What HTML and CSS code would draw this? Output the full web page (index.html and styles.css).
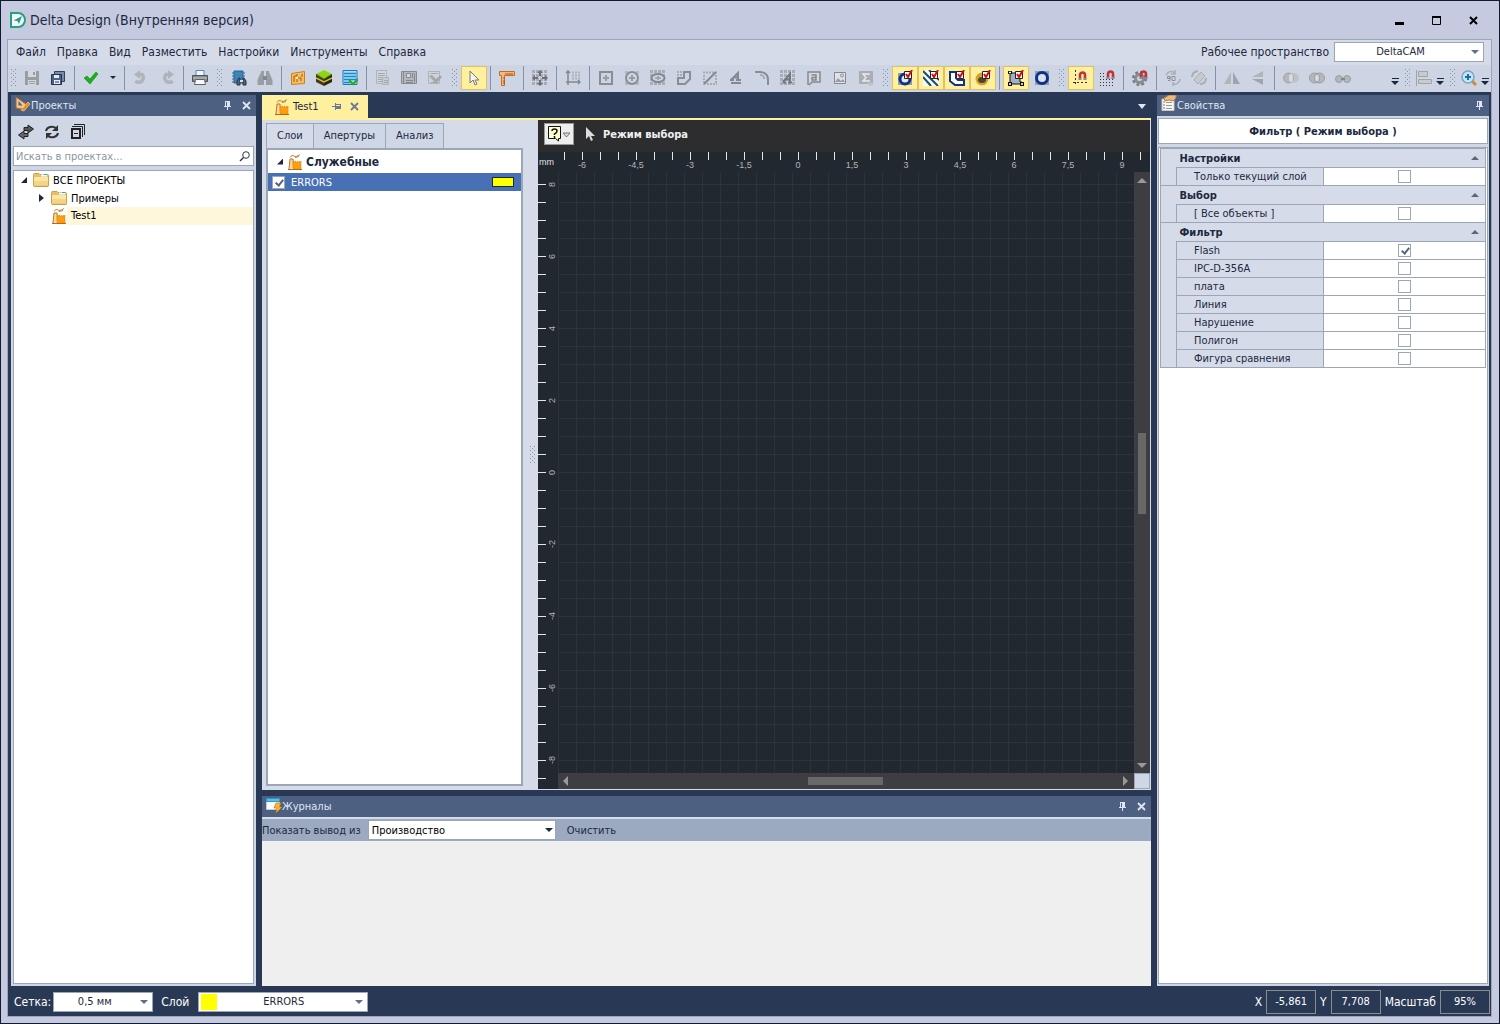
FILE: index.html
```html
<!DOCTYPE html>
<html lang="ru">
<head>
  <meta charset="UTF-8" />
  <meta name="viewport" content="width=device-width, initial-scale=1.0" />
  <title>Delta Design</title>
  <link rel="stylesheet" href="styles.css">
</head>
<body>
  <!-- shared icons -->
  <svg class="sprite" aria-hidden="true">
    <symbol id="pin" viewBox="0 0 9 9"><path d="M2 0h5v5h1v1H5v3H4V6H1V5h1zM3 1v4h1V1z" fill="currentColor" fill-rule="evenodd"/></symbol>
    <symbol id="close" viewBox="0 0 9 9"><path d="M1 1l7 7M8 1L1 8" stroke="currentColor" stroke-width="1.8"/></symbol>
    <symbol id="factory" viewBox="0 0 16 16">
      <path d="M2 15L3 5h3l.5 9" fill="#f6d7a0" stroke="#c07818"/>
      <path d="M6 15V8l2.500-1v2l2-2v2l2-2v2l1.500-2v8z" fill="#ff9d0a" stroke="#e08a10" stroke-width=".6"/>
      <path d="M3 3.500c1-2 3-2.500 4-1.500s3 .5 6-1.500M8 3.500l4-1" fill="none" stroke="#b98248"/>
      <path d="M1 15.500h14" stroke="#b96a10"/>
    </symbol>
    <symbol id="folder" viewBox="0 0 16 14">
      <path d="M.5 2.500V12.500q0 .5.5 1h14q.5 0 .5-1v-10q0-1-1-1H7L6 .5H1.500q-1 0-1 1z" fill="#e9bf62" stroke="#c9a04c"/>
      <path d="M1 4h14v8.500H1z" fill="#f5d583"/><path d="M1 4h14v4H1z" fill="#fbe6a9"/><path d="M8 1.500h6V3.500H8z" fill="#fff"/><path d="M11 1.500h3" stroke="#2aa7d8"/>
    </symbol>
    <symbol id="redcheck" viewBox="0 0 9 9"><path d="M.5 1.500h7v7h-7z" fill="#fff" stroke="#222"/><path d="M2 4l2 3 4-7" fill="none" stroke="#d01010" stroke-width="2"/></symbol>
    <symbol id="dots" viewBox="0 0 16 16"><path d="M0 1.500h16M0 5.500h16M0 9.500h16M0 13.500h16" stroke="#a9acb4" stroke-width="3" stroke-dasharray="3 1"/></symbol>
    <symbol id="magnet" viewBox="0 0 9 9"><path d="M2 9V4a2.500 2.500 0 0 1 5 0v5" fill="none" stroke="#c3313a" stroke-width="2.600"/><path d="M.7 8h2.600M5.700 8h2.600" stroke="#8a8f96" stroke-width="2"/></symbol>
  </svg>

  <div class="window">
    <header class="titlebar">
      <svg class="logo" viewBox="0 0 16 16"><path d="M1 1h7a7 7 0 0 1 0 14H1z" fill="#f2faf7" stroke="#2b9d80" stroke-width="2"/><path d="M3.500 8.500L12 4 9 12 7.500 9z" fill="#2b9d80"/></svg>
      <h1>Delta Design (Внутренняя версия)</h1>
      <button class="win-btn" aria-label="Свернуть"><svg viewBox="0 0 11 11"><path d="M1 8.500h9" stroke="#000" stroke-width="3"/></svg></button>
      <button class="win-btn" aria-label="Развернуть"><svg viewBox="0 0 11 11"><path d="M1.500 2h8v7.500h-8z" fill="none" stroke="#000"/><path d="M1 2h9" stroke="#000" stroke-width="2"/></svg></button>
      <button class="win-btn" aria-label="Закрыть"><svg viewBox="0 0 11 11"><path d="M2 2l7 7M9 2L2 9" stroke="#000" stroke-width="2"/></svg></button>
    </header>

    <div class="frame">
      <div class="menubar">
        <nav class="menu">
          <a href="#">Файл</a><a href="#">Правка</a><a href="#">Вид</a><a href="#">Разместить</a><a href="#">Настройки</a><a href="#">Инструменты</a><a href="#">Справка</a>
        </nav>
        <label for="workspace">Рабочее пространство</label>
        <span class="combo workspace"><select id="workspace"><option>DeltaCAM</option></select></span>
      </div>

      <div class="toolbar">
        <i class="grip first"></i>
        <button class="tool" aria-label="Сохранить"><svg viewBox="0 0 16 16"><path d="M1 1h14v14H1z" fill="#9a9da3"/><path d="M4 1h8v6H4zM4 10h8v5H4z" fill="#d5d8df"/><path d="M9 2h2v3H9z" fill="#9a9da3"/><path d="M5 11.500h6M5 13.500h6" stroke="#9a9da3"/></svg></button>
        <button class="tool" aria-label="Сохранить все"><svg viewBox="0 0 16 16"><path d="M4.500 1.500h10v10h-10z" fill="#7b8aa5" stroke="#31415f"/><path d="M1.500 4.500h10v10h-10z" fill="#4d6288" stroke="#24344f"/><path d="M4 5h5v3H4zM4 10h6v4H4z" fill="#e6ebf4"/><path d="M5 12h4" stroke="#24344f"/></svg></button>
        <i class="sep"></i>
        <button class="tool" aria-label="Применить"><svg viewBox="0 0 16 16"><path d="M1 8l3-2 3 3 6-7 2 2-8 10z" fill="#19b01c" stroke="#0d8d12" stroke-width=".6"/></svg></button>
        <button class="tool drop" aria-label="Варианты"><i class="arrow"></i></button>
        <i class="sep"></i>
        <button class="tool" aria-label="Отменить"><svg viewBox="0 0 16 16"><path d="M6 4.500h3a4.500 4.500 0 1 1-6.500 6.500" fill="none" stroke="#b0b3b9" stroke-width="3.500"/><path d="M7 0v9L1 4.500z" fill="#b0b3b9"/></svg></button>
        <button class="tool" aria-label="Повторить"><svg viewBox="0 0 16 16"><path d="M10 4.500H7a4.500 4.500 0 1 0 6.500 6.500" fill="none" stroke="#b0b3b9" stroke-width="3.500"/><path d="M9 0v9l6-4.500z" fill="#b0b3b9"/></svg></button>
        <i class="sep"></i>
        <button class="tool" aria-label="Печать"><svg viewBox="0 0 16 16"><path d="M4 .5h8v6H4z" fill="#eef5ff" stroke="#5b87c0"/><path d="M.5 5.500h15v6H.5z" fill="#888c90" stroke="#4e5256"/><path d="M1 8h14" stroke="#c5c8ca"/><path d="M3.500 9.500h9l1 5h-11z" fill="#fafafa" stroke="#606468"/></svg></button>
        <i class="grip"></i>
        <button class="tool" aria-label="Найти компонент"><svg viewBox="0 0 16 16"><path d="M3 1h9v12H3z" fill="#3c83b8" stroke="#25649a"/><path d="M1 3h2M1 6h2M1 9h2M1 12h2M12 3h2M12 6h2" stroke="#33658e"/><path d="M6 15v-4l2-3h1v7zM15 15v-4l-2-3h-1v7z" fill="#596371" stroke="#263240"/><path d="M9 11h3" stroke="#dde" stroke-width="2"/></svg></button>
        <button class="tool" aria-label="Найти"><svg viewBox="0 0 16 16"><path d="M.5 15v-5L4 2V1h3v14zM15.500 15v-5L12 2V1H9v14z" fill="#999da4"/><path d="M6 6h4v4H6z" fill="#84898f"/></svg></button>
        <i class="sep"></i>
        <button class="tool" aria-label="Плата"><svg viewBox="0 0 16 16"><path d="M1.500 3.500l13-2v12l-13 1z" fill="#f6be62" stroke="#cf8117"/><path d="M4 12V6h3V4M7 12V8h4v3M12 4v3" fill="none" stroke="#a85b08"/><path d="M6 7h2v2H6z" fill="#fff0c5"/></svg></button>
        <button class="tool" aria-label="Слои платы"><svg viewBox="0 0 16 16"><path d="M0 4l8 4v8l-8-4z" fill="#3f3c1b"/><path d="M16 4l-8 4v8l8-4z" fill="#28280f"/><path d="M0 8l8 4 8-4" fill="none" stroke="#e1b83e" stroke-width="1.500"/><path d="M8 0l8 4-8 5-8-5z" fill="#8fd510"/><path d="M0 4l8 5 8-5" fill="none" stroke="#4e8708"/></svg></button>
        <button class="tool" aria-label="Проверка"><svg viewBox="0 0 16 16"><path d="M1 .5h14v14H1z" fill="#a9dcf6" stroke="#1878bd"/><path d="M2 3.500h12M2 6.500h12M2 9.500h12M2 12.500h6" stroke="#1d85c9" stroke-width="1.300"/><path d="M7 10l4 4 5-5" fill="none" stroke="#29ad16" stroke-width="2"/></svg></button>
        <i class="sep"></i>
        <button class="tool" aria-label="Отчёт"><svg viewBox="0 0 16 16"><path d="M1.500.500h10v13h-10z" fill="#d3d6dc" stroke="#b0b3b9"/><path d="M3 3.500h7M3 5.500h7M3 7.500h7M3 9.500h5M3 11.500h5" stroke="#a3a6ac"/><path d="M7.500 7.500h6v7h-6z" fill="#c8cbd1" stroke="#b0b3b9"/><path d="M9 10.500h4M9 12.500h4" stroke="#a3a6ac"/></svg></button>
        <button class="tool" aria-label="Книга"><svg viewBox="0 0 16 16"><path d="M.5 1.500h15v12H.5z" fill="#b3b6bc" stroke="#888c92"/><path d="M2.500 2v11M5.500 3.500h4v4h-4zM5 10.500h7M5 12.500h7M11.500 3v5M13.500 3v9" fill="#d5d8df" stroke="#85898f"/></svg></button>
        <button class="tool" aria-label="Проверить отчёт"><svg viewBox="0 0 16 16"><path d="M1.500 1.500h11v12h-11z" fill="#d0d3d9" stroke="#b0b3b9"/><path d="M4 3.500h7M4 12.500h7" stroke="#a3a6ac"/><path d="M2 6l3-1 4 4 4-4 2 2-6 7z" fill="#a4a7ad"/></svg></button>
        <i class="grip"></i>
        <button class="tool on" aria-label="Режим выбора"><svg viewBox="0 0 16 16"><path d="M4 1v12l3-3 2 5 2-1-2-4h4z" fill="#f3f3f3" stroke="#777"/></svg></button>
        <i class="sep"></i>
        <button class="tool" aria-label="Линейка"><svg viewBox="0 0 16 16"><path d="M.5 1.500h15v4h-10v10h-3v-10h-2z" fill="#f5ba75" stroke="#c26c2b"/><path d="M7 3v2M9 3v2M11 3v2M13 3v2M4 8h2M4 11h2M4 13h2" stroke="#a65316"/></svg></button>
        <i class="sep"></i>
        <button class="tool" aria-label="Переместить"><svg viewBox="0 0 16 16"><use href="#dots"/><path d="M8 0l3 3H9v3H7V3H5zM8 16l3-3H9v-3H7v3H5zM0 8l3-3v2h3v2H3v2zM16 8l-3-3v2h-3v2h3v2z" fill="#6d7177"/></svg></button>
        <i class="sep"></i>
        <button class="tool" aria-label="Начало координат"><svg viewBox="0 0 16 16"><path d="M7 2.500h9M7 5.500h9M7 8.500h9" stroke="#b0b3b9" stroke-width="2" stroke-dasharray="2 1"/><path d="M3 1v14M1 12h14M1 3l2-2 2 2M13 10l2 2-2 2" fill="none" stroke="#83878e" stroke-width="1.500"/></svg></button>
        <i class="sep"></i>
        <button class="tool" aria-label="Прямоугольник"><svg viewBox="0 0 16 16"><path d="M2 2h12v12H2z" fill="none" stroke="#898d94" stroke-width="2"/><path d="M5 8h6M8 5v6" stroke="#989ca3" stroke-width="2" stroke-dasharray="2 0"/></svg></button>
        <button class="tool" aria-label="Окружность"><svg viewBox="0 0 16 16"><path d="M1 1h3v3H1zM12 1h3v3h-3zM1 12h3v3H1zM12 12h3v3h-3z" fill="#b4b7bd"/><circle cx="8" cy="8" r="6" fill="none" stroke="#898d94" stroke-width="2"/><path d="M5 8h6M8 5v6" stroke="#989ca3" stroke-width="2"/></svg></button>
        <button class="tool" aria-label="Эллипс"><svg viewBox="0 0 16 16"><use href="#dots"/><ellipse cx="8" cy="8" rx="6.500" ry="4" fill="#cdd4e5" stroke="#85898f" stroke-width="2"/><path d="M5 8h6M8 6v4" stroke="#989ca3" stroke-width="1.500"/></svg></button>
        <button class="tool" aria-label="Полигон"><svg viewBox="0 0 16 16"><path d="M1 2h6M1 5h5" stroke="#a9acb4" stroke-width="2" stroke-dasharray="2 1"/><path d="M8 2h6v7l-5 5H2V8h6z" fill="none" stroke="#898d94" stroke-width="2"/></svg></button>
        <button class="tool" aria-label="Линия"><svg viewBox="0 0 16 16"><path d="M1 2.500h14M2 5v10M5 14h10M14 5v9" stroke="#a9acb4" stroke-width="2" stroke-dasharray="2 1"/><path d="M2 14L14 2" stroke="#85898f" stroke-width="2"/></svg></button>
        <button class="tool" aria-label="Текст"><svg viewBox="0 0 16 16"><path d="M3 10l7-7v7M6 7.500h4M2 10h4M8 10h5M3 13h10" fill="none" stroke="#85898f" stroke-width="2"/></svg></button>
        <button class="tool" aria-label="Дуга"><svg viewBox="0 0 16 16"><path d="M1 2h5q8 0 8 8v5" fill="none" stroke="#898d94" stroke-width="2"/><path d="M6 5h3v3h3" fill="none" stroke="#a9acb4" stroke-width="2" stroke-dasharray="2 1"/></svg></button>
        <button class="tool" aria-label="Область текста"><svg viewBox="0 0 16 16"><use href="#dots"/><path d="M3 12l7-8v8M6 9.500h4M3 12.500h3M8 12.500h4" fill="none" stroke="#74787f" stroke-width="2"/></svg></button>
        <button class="tool" aria-label="Выноска"><svg viewBox="0 0 16 16"><path d="M2 15V2h12v10H6l-3 3" fill="#d5d8df" stroke="#85898f" stroke-width="1.500"/><path d="M5.500 5H10v5H6V7.500h4" fill="none" stroke="#85898f" stroke-width="1.500"/></svg></button>
        <button class="tool" aria-label="Изображение"><svg viewBox="0 0 16 16"><path d="M2.500 2.500h11v11h-11z" fill="#dfe2e8" stroke="#85898f"/><path d="M3 12l3-4 3 3 2-2 2 3z" fill="#999da4"/><circle cx="10" cy="5.500" r="1.500" fill="none" stroke="#85898f"/></svg></button>
        <button class="tool" aria-label="Сумма"><svg viewBox="0 0 16 16"><rect x="1" y="1" width="14" height="13" rx="1" fill="#aaadb3"/><path d="M11 5V4H5l3 3.500L5 11h6v-1" fill="none" stroke="#e8eaee" stroke-width="1.500"/><path d="M8 13h4v-2l4 3-4 2z" fill="#bec1c7"/></svg></button>
        <i class="grip"></i>
        <button class="tool on" aria-label="Площадки"><svg viewBox="0 0 16 16"><path d="M1 3h14v12H1z" fill="#9b9c96"/><circle cx="8" cy="9" r="5" fill="#e8e8e8" stroke="#0b3191" stroke-width="3"/><use href="#redcheck" x="7" y="0" width="9" height="9"/></svg></button>
        <button class="tool on" aria-label="Проводники"><svg viewBox="0 0 16 16"><path d="M0 0h16v16H0z" fill="#f8f8f4"/><path d="M0 1l15 15M0 7l8 9M6 0l10 10" stroke="#17506e" stroke-width="2"/><use href="#redcheck" x="7" y="0" width="9" height="9"/></svg></button>
        <button class="tool on" aria-label="Полигоны"><svg viewBox="0 0 16 16"><path d="M1 2h6v6l2 2h6v5H6L1 11z" fill="#fff" stroke="#0b3191" stroke-width="2"/><use href="#redcheck" x="7" y="0" width="9" height="9"/></svg></button>
        <button class="tool on" aria-label="Отверстия"><svg viewBox="0 0 16 16"><circle cx="7" cy="9" r="6.500" fill="#d6a22c"/><ellipse cx="7" cy="10" rx="4" ry="3" fill="#4b4434"/><use href="#redcheck" x="7" y="0" width="9" height="9"/></svg></button>
        <i class="sep"></i>
        <button class="tool on" aria-label="Контуры"><svg viewBox="0 0 16 16"><path d="M2 3h10v9h2v2H2z" fill="#9fb2c8" stroke="#111"/><path d="M0 1h4v3H0zM0 12h4v4H0zM12 12h4v4h-4z" fill="#111"/><path d="M1 2.500h2M1 14h2M13 14h2" stroke="#fff" stroke-width="1.500"/><use href="#redcheck" x="7" y="0" width="9" height="9"/></svg></button>
        <button class="tool" aria-label="Площадка"><svg viewBox="0 0 16 16"><path d="M1 1h14v14H1z" fill="#9b9ea4"/><circle cx="8" cy="8" r="5.500" fill="#dce1ea" stroke="#0b3191" stroke-width="3"/></svg></button>
        <i class="grip"></i>
        <button class="tool on" aria-label="Привязка"><svg viewBox="0 0 16 16"><path d="M2.500 0v16M0 12.500h16" stroke="#333" stroke-dasharray="2 2"/><use href="#magnet" x="5" y="1" width="9" height="9"/></svg></button>
        <button class="tool" aria-label="Привязка к сетке"><svg viewBox="0 0 16 16"><path d="M1 3.500h5M1 6.500h5M1 9.500h14M1 12.500h14M1 15.500h14" stroke="#333" stroke-dasharray="1 2"/><use href="#magnet" x="7" y="0" width="9" height="9"/></svg></button>
        <i class="sep"></i>
        <button class="tool" aria-label="Настройка привязки"><svg viewBox="0 0 16 16"><circle cx="7.500" cy="8.500" r="6" fill="none" stroke="#777b80" stroke-width="3" stroke-dasharray="2.700 2"/><circle cx="7.500" cy="8.500" r="4" fill="none" stroke="#898d92" stroke-width="3"/><use href="#magnet" x="7" y="0" width="9" height="9"/></svg></button>
        <i class="sep"></i>
        <button class="tool" aria-label="Повернуть на 90°"><svg viewBox="0 0 16 16"><path d="M1 5q4-6 9-2M15 9q-1 6-7 5M10 0v4H6M8 12v4" fill="none" stroke="#aaadb3" stroke-width="1.500"/><path d="M5 6.500H2.500v2H5V6.500v4H3M7 6.500h3v4H7z" fill="none" stroke="#8c9097"/></svg></button>
        <button class="tool" aria-label="Повернуть"><svg viewBox="0 0 16 16"><path d="M3 10l7-8 4 4-7 8z" fill="#c8cacf" stroke="#aaadb3"/><path d="M1 7q0-5 6-6M15 8q0 6-6 6" fill="none" stroke="#aaadb3" stroke-width="2"/></svg></button>
        <i class="sep"></i>
        <button class="tool" aria-label="Отразить по горизонтали"><svg viewBox="0 0 16 16"><path d="M7 2v12H0z" fill="#b3b5b8"/><path d="M9 2v12h7z" fill="#a1a4a8"/></svg></button>
        <button class="tool" aria-label="Отразить по вертикали"><svg viewBox="0 0 16 16"><path d="M13 1v6H2z" fill="#b3b5b8"/><path d="M13 15V9H2z" fill="#a1a4a8"/></svg></button>
        <i class="sep"></i>
        <button class="tool" aria-label="Вычитание"><svg viewBox="0 0 16 16"><circle cx="11" cy="8" r="5" fill="#c0c3c9"/><circle cx="5.500" cy="8" r="5" fill="#b3b6bb" stroke="#a1a4a8"/><ellipse cx="8" cy="8" rx="2" ry="4" fill="#d8dbe2"/></svg></button>
        <button class="tool" aria-label="Объединение"><svg viewBox="0 0 16 16"><circle cx="5.500" cy="8" r="5" fill="#b3b6bb" stroke="#999ca1"/><circle cx="10.500" cy="8" r="5" fill="#b3b6bb" stroke="#999ca1"/><ellipse cx="8" cy="8" rx="2.500" ry="4" fill="#d8dbe2" stroke="#999ca1"/></svg></button>
        <button class="tool" aria-label="Связать"><svg viewBox="0 0 16 16"><circle cx="4" cy="9" r="3.500" fill="#b3b6bb" stroke="#999ca1"/><circle cx="12" cy="9" r="3.500" fill="#b3b6bb" stroke="#999ca1"/><path d="M6 9h4" stroke="#84888d" stroke-width="2"/></svg></button>
        <span class="spacer"></span>
        <button class="more" aria-label="Ещё"><i class="arrow"></i></button>
        <i class="grip"></i>
        <button class="tool narrow" aria-label="Выравнивание"><svg viewBox="0 0 16 16"><path d="M.5 0v16" stroke="#a1a4a8"/><path d="M2.500 1.500h9v5h-9zM2.500 9.500h13v4h-13z" fill="#c8cad0" stroke="#a1a4a8"/></svg></button>
        <button class="more" aria-label="Ещё"><i class="arrow"></i></button>
        <i class="grip"></i>
        <button class="tool narrow" aria-label="Увеличить"><svg viewBox="0 0 16 16"><path d="M11 11l4 4" stroke="#d58b2a" stroke-width="3"/><circle cx="7" cy="7" r="6" fill="#c3e6fb" stroke="#87a0bb" stroke-width="1.500"/><path d="M4 7h6M7 4v6" stroke="#1471ad" stroke-width="2"/></svg></button>
        <button class="more" aria-label="Ещё"><i class="arrow"></i></button>
      </div>

      <main class="workspace-area">
        <section class="panel projects">
          <header class="panel-head">
            <svg class="ico" viewBox="0 0 16 16"><path d="M1 1l10 7-2 4-4 1-4-1z" fill="#f0c58a" stroke="#a3642a"/><path d="M3.500 5l4 4.500h-4z" fill="#4d6082"/><path d="M6 14l7-8 2 2-6 7z" fill="#ef8a18" stroke="#fbe0b0" stroke-width=".6"/></svg>
            <h2>Проекты</h2>
            <button class="mini" aria-label="Закрепить"><svg><use href="#pin"/></svg></button>
            <button class="mini" aria-label="Закрыть"><svg><use href="#close"/></svg></button>
          </header>
          <div class="panel-body">
            <div class="project-tools">
              <button aria-label="Синхронизация"><svg viewBox="0 0 16 16"><path d="M6 3.500h4V1l5.500 4L10 9V6.500H6z" fill="#555" stroke="#222"/><path d="M10 9.500H6V7L.5 11 6 15v-2.500h4z" fill="#666" stroke="#222"/></svg></button>
              <button aria-label="Обновить"><svg viewBox="0 0 16 16"><path d="M2 7a6 5 0 0 1 10-3M14 9a6 5 0 0 1-10 3" fill="none" stroke="#333" stroke-width="2"/><path d="M14 1v6H8zM2 15V9h6z" fill="#333"/></svg></button>
              <button aria-label="Свернуть все"><svg viewBox="0 0 16 16"><path d="M2 5h8v9H2z" fill="none" stroke="#222" stroke-width="2"/><path d="M4 9.500h4" stroke="#222"/><path d="M2 2.500h10.500V13M4 .5h10.500V11" fill="none" stroke="#222"/></svg></button>
            </div>
            <label class="search">
              <input type="text" placeholder="Искать в проектах..." aria-label="Искать в проектах">
              <svg viewBox="0 0 11 11"><circle cx="7" cy="4" r="3.300" fill="none" stroke="#293955"/><path d="M4.500 6.500L1 10" stroke="#293955" stroke-width="1.500"/></svg>
            </label>
            <ul class="tree">
              <li><i class="twist open"></i><svg class="ico folder"><use href="#folder"/></svg><span>ВСЕ ПРОЕКТЫ</span></li>
              <li class="child"><i class="twist"></i><svg class="ico folder"><use href="#folder"/></svg><span>Примеры</span></li>
              <li class="child selected"><i class="twist none"></i><svg class="ico"><use href="#factory"/></svg><span>Test1</span></li>
            </ul>
          </div>
        </section>

        <div class="center">
          <section class="document">
            <div class="doc-tabs">
              <div class="doc-tab">
                <svg class="ico"><use href="#factory"/></svg>
                <span>Test1</span>
                <button class="mini" aria-label="Закрепить"><svg class="side"><use href="#pin"/></svg></button>
                <button class="mini" aria-label="Закрыть"><svg><use href="#close"/></svg></button>
              </div>
              <button class="tab-list" aria-label="Список вкладок"><i class="arrow"></i></button>
            </div>
            <div class="doc-body">
              <div class="layers">
                <div class="layer-tabs" role="tablist">
                  <button role="tab" class="active" aria-selected="true">Слои</button><button role="tab">Апертуры</button><button role="tab">Анализ</button>
                </div>
                <div class="layer-list">
                  <div class="layer-group"><i class="twist open"></i><svg class="ico"><use href="#factory"/></svg><b>Служебные</b></div>
                  <label class="layer-row"><input type="checkbox" class="box" checked><span>ERRORS</span><i class="swatch"></i></label>
                </div>
              </div>
              <i class="splitter"></i>
              <div class="editor">
                <div class="mode-bar">
                  <button class="help" aria-label="Подсказка"><svg viewBox="0 0 24 16"><path d="M1.500.5h12v12h-2v2.500l-3-2.500h-7z" fill="#ffffcf" stroke="#111"/><path d="M5 5q0-2 2.500-2T10 5 7.500 8v1M7.500 10v2" fill="none" stroke="#111" stroke-width="1.500"/><path d="M16 7h7l-3.500 4z" fill="#ddd" stroke="#777"/></svg></button>
                  <svg class="ico" viewBox="0 0 16 16"><path d="M4 1v12l3-3 2 5 2-1-2-4h4z" fill="#ddd"/></svg>
                  <b>Режим выбора</b>
                </div>
                <div class="ruler-x">
                  <span class="unit">mm</span>
                  <span>-6</span><span>-4,5</span><span>-3</span><span>-1,5</span><span>0</span><span>1,5</span><span>3</span><span>4,5</span><span>6</span><span>7,5</span><span>9</span>
                </div>
                <div class="ruler-y">
                  <span>8</span><span>6</span><span>4</span><span>2</span><span>0</span><span>-2</span><span>-4</span><span>-6</span><span>-8</span>
                </div>
                <div class="canvas"></div>
                <div class="scroll-y"><i class="up"></i><i class="thumb"></i><i class="down"></i></div>
                <div class="scroll-x"><i class="left"></i><i class="thumb"></i><i class="right"></i></div>
                <div class="corner"></div>
              </div>
            </div>
          </section>

          <section class="panel log">
            <header class="panel-head">
              <svg class="ico" viewBox="0 0 16 16"><path d="M.5.500h13v11H.500z" fill="#f8fbff" stroke="#c0cbd8"/><path d="M0 0h14v4H0z" fill="#2399cf"/><path d="M1 2h12" stroke="#a5e0f7"/><path d="M10 5h5l-2 4h3l-6 6 1-5H8z" fill="#ffb52b" stroke="#c87a12" stroke-width=".7"/></svg>
              <h2>Журналы</h2>
              <button class="mini" aria-label="Закрепить"><svg><use href="#pin"/></svg></button>
              <button class="mini" aria-label="Закрыть"><svg><use href="#close"/></svg></button>
            </header>
            <div class="log-bar">
              <label for="source">Показать вывод из</label>
              <span class="combo source"><select id="source"><option>Производство</option></select></span>
              <button>Очистить</button>
            </div>
            <div class="log-body"></div>
          </section>
        </div>

        <section class="panel properties">
          <header class="panel-head">
            <svg class="ico" viewBox="0 0 16 16"><path d="M1 4h12v11.500H1z" fill="#f7f7f4" stroke="#c9c9c4"/><path d="M2.500 7h1" stroke="#26a336" stroke-width="1.500"/><path d="M2.500 10h1" stroke="#c22" stroke-width="1.500"/><path d="M2.500 13h1" stroke="#24c" stroke-width="1.500"/><path d="M5 7.500h6M5 10.500h6M5 13.500h6" stroke="#999"/><path d="M3 3l5-3h7v3l-3 3-4-1-4 1z" fill="#eab981" stroke="#b57a42"/></svg>
            <h2>Свойства</h2>
            <button class="mini" aria-label="Закрепить"><svg><use href="#pin"/></svg></button>
          </header>
          <div class="panel-body">
            <h3>Фильтр ( Режим выбора )</h3>
            <div class="prop-grid">
              <table>
                <colgroup><col class="c-indent"><col class="c-name"><col></colgroup>
                <tr class="group"><td></td><th colspan="2">Настройки<i class="fold"></i></th></tr>
                <tr><td></td><td><label for="p1">Только текущий слой</label></td><td><input id="p1" type="checkbox" class="box"></td></tr>
                <tr class="group"><td></td><th colspan="2">Выбор<i class="fold"></i></th></tr>
                <tr><td></td><td><label for="p2">[ Все объекты ]</label></td><td><input id="p2" type="checkbox" class="box"></td></tr>
                <tr class="group"><td></td><th colspan="2">Фильтр<i class="fold"></i></th></tr>
                <tr><td></td><td><label for="p3">Flash</label></td><td><input id="p3" type="checkbox" class="box" checked></td></tr>
                <tr><td></td><td><label for="p4">IPC-D-356A</label></td><td><input id="p4" type="checkbox" class="box"></td></tr>
                <tr><td></td><td><label for="p5">плата</label></td><td><input id="p5" type="checkbox" class="box"></td></tr>
                <tr><td></td><td><label for="p6">Линия</label></td><td><input id="p6" type="checkbox" class="box"></td></tr>
                <tr><td></td><td><label for="p7">Нарушение</label></td><td><input id="p7" type="checkbox" class="box"></td></tr>
                <tr><td></td><td><label for="p8">Полигон</label></td><td><input id="p8" type="checkbox" class="box"></td></tr>
                <tr><td></td><td><label for="p9">Фигура сравнения</label></td><td><input id="p9" type="checkbox" class="box"></td></tr>
              </table>
            </div>
          </div>
        </section>
      </main>

      <footer class="statusbar">
        <label for="grid">Сетка:</label>
        <span class="combo grid-step"><select id="grid"><option>0,5 мм</option></select></span>
        <label for="layer">Слой</label>
        <span class="combo layer-pick"><i class="swatch"></i><select id="layer"><option>ERRORS</option></select></span>
        <span class="spacer"></span>
        <span>X</span><output>-5,861</output>
        <span>Y</span><output>7,708</output>
        <span>Масштаб</span><output>95%</output>
      </footer>
    </div>
  </div>
</body>
</html>
```

FILE: styles.css
```css
* {
  box-sizing: border-box;
}
body {
  margin: 0;
  font-family: "DejaVu Sans Condensed", "DejaVu Sans", sans-serif;
  font-size: 11px;
  color: #1b293e;
}
button, input, select {
  font: inherit;
  color: inherit;
}
button {
  padding: 0;
  border: 0;
  background: none;
}
h1, h2, h3 {
  margin: 0;
  font-weight: normal;
}
i {
  flex: none;
}
svg {
  display: block;
  flex: none;
}
.sprite {
  position: absolute;
  width: 0;
  height: 0;
}
.ico {
  width: 16px;
  height: 16px;
}
.spacer {
  flex: 1;
}

/* window */
.window {
  display: flex;
  flex-direction: column;
  height: 100vh;
  padding: 0 7px 6px 6px;
  border: 1px solid #101c2e;
  background: #c5cae0;
}
.titlebar {
  display: flex;
  align-items: center;
  height: 38px;
  padding-left: 3px;
}
.titlebar h1 {
  flex: 1;
  font-size: 14px;
}
.logo {
  width: 16px;
  height: 16px;
  margin-right: 4px;
}
.win-btn {
  display: grid;
  place-items: center;
  width: 37px;
}
.win-btn svg {
  width: 11px;
  height: 11px;
}
.frame {
  flex: 1;
  min-height: 0;
  display: flex;
  flex-direction: column;
  border: 1px solid #9ba7b7;
  background: #293955;
}

/* menu */
.menubar {
  display: flex;
  align-items: center;
  height: 25px;
  padding: 0 7px 2px 8px;
  background: #d6dbe9;
  font-size: 12px;
}
.menu {
  display: flex;
  flex: 1;
  gap: 11px;
}
.menu a {
  color: inherit;
  text-decoration: none;
}
.combo {
  position: relative;
  display: flex;
  align-items: center;
  height: 20px;
  border: 1px solid #9ba7b7;
  background: #fff;
}
.combo::after {
  content: "";
  position: absolute;
  right: 4px;
  top: 7px;
  border: 4px solid transparent;
  border-top-color: #5d6f8f;
  border-bottom: 0;
  pointer-events: none;
}
.combo select {
  flex: 1;
  width: 100%;
  height: 100%;
  padding: 0 20px 0 3px;
  border: 0;
  background: none;
  appearance: none;
  font-size: 11px;
  text-align-last: center;
  color: #1b293e;
}
.workspace {
  width: 150px;
  margin-left: 5px;
}

/* toolbar */
.toolbar {
  display: flex;
  align-items: center;
  height: 27px;
  padding-bottom: 2px;
  background: #cdd4e4;
}
.tool {
  display: grid;
  place-items: center;
  width: 26px;
  height: 24px;
}
.tool svg {
  width: 16px;
  height: 16px;
}
.tool.on {
  border: 1px solid #e0c264;
  background: #fff0a0;
}
.tool.drop {
  width: 17px;
}
.tool.narrow {
  width: 20px;
}
.sep {
  width: 7px;
  height: 24px;
  background: linear-gradient(#8591a5, #8591a5) 3px 0 / 1px 100% no-repeat;
}
.grip, .splitter {
  background-image: conic-gradient(from 270deg at 1px 1px, #8793a8 90deg, transparent 0), conic-gradient(from 270deg at 1px 1px, #8793a8 90deg, transparent 0);
  background-size: 4px 4px;
  background-position: 0 0, 2px 2px;
  background-origin: content-box;
  background-clip: content-box;
}
.grip {
  width: 13px;
  height: 18px;
  padding: 0 4px;
}
.grip.first {
  width: 11px;
  padding: 0 3px;
}
.arrow {
  display: block;
  border: 3px solid transparent;
  border-top-color: #1b293e;
  border-bottom: 0;
}
.more {
  display: flex;
  justify-content: center;
  width: 12px;
  height: 8px;
  padding-top: 3px;
  align-self: end;
  margin-bottom: 4px;
  background: linear-gradient(#1b293e, #1b293e) center top / 7px 1px no-repeat;
}
.more .arrow {
  border-width: 4px;
  border-bottom: 0;
}

/* docking layout */
.workspace-area {
  flex: 1;
  min-height: 0;
  display: grid;
  grid-template-columns: 245px 1fr 332px;
  gap: 6px;
  padding: 3px 2px 0 3px;
}
.panel {
  display: flex;
  flex-direction: column;
  min-height: 0;
}
.panel-head {
  display: flex;
  align-items: center;
  height: 21px;
  padding: 0 5px 0 4px;
  background: #4d6082;
  color: #dfe5f2;
}
.panel-head .ico {
  align-self: start;
  margin-top: 1px;
}
.panel-head h2 {
  flex: 1;
  font-size: 11px;
}
.mini {
  display: grid;
  place-items: center;
  width: 9px;
  margin-left: 10px;
}
.mini svg {
  width: 9px;
  height: 9px;
}
.mini .side {
  transform: rotate(90deg);
}
.panel-body {
  flex: 1;
  display: flex;
  flex-direction: column;
  padding: 2px;
  background: #cfd6e5;
}

/* projects */
.project-tools {
  display: flex;
  align-items: center;
  gap: 10px;
  height: 28px;
  padding: 0 5px;
}
.project-tools svg {
  width: 16px;
  height: 16px;
}
.search {
  display: flex;
  align-items: center;
  height: 20px;
  padding: 0 3px 0 2px;
  margin-bottom: 4px;
  border: 1px solid #9ba7b7;
  background: #fff;
}
.search input {
  flex: 1;
  min-width: 0;
  padding: 0;
  border: 0;
  outline: 0;
}
.search input::placeholder {
  color: #8b95a5;
}
.search svg {
  width: 11px;
  height: 11px;
}
.tree {
  flex: 1;
  margin: 0;
  padding: 0;
  border: 1px solid #9ba7b7;
  background: #fff;
  color: #000;
  list-style: none;
}
.tree li {
  display: flex;
  align-items: center;
  height: 18px;
  padding-left: 7px;
}
.tree li.child {
  padding-left: 25px;
}
.tree li.selected span {
  flex: 1;
  line-height: 18px;
  background: #fff7dc;
}
.tree span {
  padding-left: 4px;
}
.folder {
  height: 14px;
}
.twist {
  width: 6px;
  height: 6px;
  margin-right: 6px;
  background: #1b293e;
  clip-path: polygon(100% 0, 100% 100%, 0 100%);
}
.twist:not(.open) {
  width: 5px;
  height: 8px;
  margin-right: 7px;
  clip-path: polygon(0 0, 100% 50%, 0 100%);
}
.twist.none {
  visibility: hidden;
}

/* document */
.center {
  display: flex;
  flex-direction: column;
  gap: 6px;
  min-width: 0;
  min-height: 0;
}
.document {
  flex: 1;
  min-height: 0;
  display: flex;
  flex-direction: column;
}
.doc-tabs {
  display: flex;
  height: 25px;
  border-bottom: 2px solid #fff0a0;
}
.doc-tab {
  display: flex;
  align-items: center;
  width: 106px;
  padding-left: 12px;
  background: #fff0a0;
}
.doc-tab span {
  flex: 1;
  padding-left: 3px;
}
.doc-tab .mini {
  margin: 0 9px 0 0;
  color: #697998;
}
.tab-list {
  margin-left: auto;
  padding-right: 5px;
}
.tab-list .arrow {
  border-width: 5px 4px 0;
  border-top-color: #dfe5f2;
}
.doc-body {
  flex: 1;
  min-height: 0;
  display: flex;
  padding: 0 1px 1px 0;
  background: #d6dbe9;
}
.layers {
  display: flex;
  flex-direction: column;
  width: 261px;
  padding: 3px 0 3px 4px;
}
.layer-tabs {
  display: flex;
}
.layer-tabs button {
  height: 25px;
  padding: 0 10px 2px;
  border: 1px solid #9ba7b7;
  border-bottom: 0;
  background: #cfd6e5;
  margin-left: -1px;
}
.layer-tabs .active {
  margin-left: 0;
  background: #d6dbe9;
}
.layer-list {
  flex: 1;
  border: 2px solid #9ba7b7;
  background: #fff;
}
.layer-group {
  display: flex;
  align-items: center;
  height: 23px;
  padding-left: 9px;
  font-size: 12px;
}
.layer-group .twist {
  margin-right: 4px;
}
.layer-group b {
  padding-left: 3px;
}
.layer-row {
  display: flex;
  align-items: center;
  gap: 6px;
  height: 18px;
  padding: 0 7px 0 4px;
  background: #4870b5;
  color: #fff;
}
.layer-row span {
  flex: 1;
}
.layer-row .swatch {
  width: 22px;
  height: 10px;
  border: 1px solid #1b293e;
  background: #ff0;
}
.box {
  position: relative;
  flex: none;
  width: 13px;
  height: 13px;
  margin: 0;
  border: 1px solid #9ba7b7;
  background: #fff;
  appearance: none;
}
.box:checked::after {
  content: "";
  position: absolute;
  left: 4px;
  top: 1px;
  width: 3px;
  height: 6px;
  border: solid #56657f;
  border-width: 0 2px 2px 0;
  transform: rotate(40deg);
}
.splitter {
  align-self: center;
  width: 6px;
  height: 18px;
  margin: 0 2px 0 7px;
}

/* editor */
.editor {
  flex: 1;
  min-width: 0;
  display: grid;
  grid-template: 32px 20px 1fr 16px / 20px 1fr 16px;
  background: #21282f;
}
.mode-bar {
  grid-column: 1 / -1;
  display: flex;
  align-items: center;
  padding: 0 6px 4px;
  background: #2d2d30;
  color: #f0f0f0;
}
.mode-bar .ico {
  margin: 0 5px 0 8px;
}
.help {
  display: grid;
  place-items: center;
  width: 30px;
  height: 22px;
  border: 1px solid #999;
  background: #eee;
}
.help svg {
  width: 24px;
  height: 16px;
}
.ruler-x {
  grid-column: 1 / -1;
  display: flex;
  overflow: hidden;
  background: repeating-linear-gradient(90deg, #ece6d8 0 1px, transparent 1px 18px) 26px 0 / 100% 8px no-repeat;
  color: #b4b4b4;
  font-family: "Liberation Sans", sans-serif;
  font-size: 9px;
}
.ruler-x span {
  flex: none;
  width: 54px;
  padding-top: 8px;
  text-align: center;
}
.ruler-x .unit {
  width: 17px;
  padding-top: 5px;
  color: #e0e0e0;
}
.ruler-y {
  grid-row: 3 / 5;
  display: flex;
  flex-direction: column;
  gap: 48px;
  overflow: hidden;
  background: repeating-linear-gradient(#ece6d8 0 1px, transparent 1px 18px) 0 12px / 8px 100% no-repeat;
  color: #b4b4b4;
  font-family: "Liberation Sans", sans-serif;
  font-size: 9px;
}
.ruler-y span {
  flex: none;
  height: 24px;
  width: 12px;
  margin-left: 8px;
  line-height: 12px;
  text-align: center;
  writing-mode: vertical-rl;
  transform: rotate(180deg);
}
.canvas {
  background-image: linear-gradient(90deg, #2c343b 1px, transparent 1px), linear-gradient(#2c343b 1px, transparent 1px);
  background-size: 18px 18px;
  background-position: 0 12px;
}
.scroll-y, .scroll-x {
  display: flex;
  align-items: center;
  background: #3e3e42;
}
.scroll-y {
  flex-direction: column;
  justify-content: space-between;
  padding: 6px 0 5px;
}
.scroll-x {
  grid-column: 2;
  justify-content: space-between;
  padding: 0 6px 0 5px;
}
.scroll-y .thumb {
  width: 8px;
  height: 81px;
}
.scroll-x .thumb {
  width: 75px;
  height: 8px;
}
.thumb {
  background: #686868;
}
.up, .down, .left, .right {
  border: 5px solid transparent;
}
.up {
  border-top: 0;
  border-bottom-color: #999;
}
.down {
  border-bottom: 0;
  border-top-color: #999;
}
.left {
  border-left: 0;
  border-right-color: #999;
}
.right {
  border-right: 0;
  border-left-color: #999;
}
.corner {
  border: 1px solid #9ba7b7;
  background: #cfd6e5;
}

/* log */
.log {
  height: 190px;
}
.log .panel-head .ico {
  margin-top: 2px;
}
.log-bar {
  display: flex;
  align-items: center;
  height: 24px;
  border-top: 2px solid #d6dbe9;
  background: #9ba9c1;
}
.source {
  width: 188px;
  margin: 0 11px 0 7px;
}
.source select {
  text-align-last: left;
  color: #000;
}
.source::after {
  right: 2px;
  border-top-color: #1b293e;
}
.log-body {
  flex: 1;
  background: #efefef;
}

/* properties */
.properties .panel-head .ico {
  margin-top: 0;
}
.properties .panel-body {
  padding: 2px 1px;
  gap: 3px;
}
.properties h3 {
  height: 26px;
  border: 1px solid #9ba7b7;
  background: #fff;
  font-size: 11px;
  font-weight: bold;
  line-height: 25px;
  text-align: center;
}
.prop-grid {
  flex: 1;
  padding: 0 1px 1px;
  border: 1px solid #9ba7b7;
  background: #fff;
}
.prop-grid table {
  width: 100%;
  table-layout: fixed;
  border-collapse: collapse;
  border: 1px solid #9ba7b7;
}
.c-indent {
  width: 16px;
}
.c-name {
  width: 147px;
}
.prop-grid tr {
  height: 18px;
  background: #d6dbe9;
}
.prop-grid .group {
  height: 19px;
}
.prop-grid td {
  padding: 0;
  border: 1px solid #9ba7b7;
}
.prop-grid td:first-child {
  border-top: 0;
  border-bottom: 0;
}
.prop-grid .group td:first-child {
  border-top: 1px solid #9ba7b7;
  border-right: 0;
}
.prop-grid th {
  padding: 0 0 0 3px;
  border-bottom: 1px solid #9ba7b7;
  text-align: left;
}
.prop-grid td:nth-child(2) {
  padding-left: 17px;
}
.prop-grid td:nth-child(3) {
  background: #fff;
  text-align: center;
}
.prop-grid .box {
  display: block;
  margin: 0 auto;
}
.fold {
  float: right;
  margin: 4px 6px 0 0;
  border: 4px solid transparent;
  border-top: 0;
  border-bottom-color: #5c6675;
}

/* status bar */
.statusbar {
  display: flex;
  align-items: center;
  height: 30px;
  padding: 1px 1px 0 6px;
  color: #fff;
  font-size: 12px;
}
.grid-step {
  width: 100px;
  margin: 0 8px 0 2px;
}
.layer-pick {
  width: 170px;
  margin-left: 9px;
}
.layer-pick .swatch {
  width: 16px;
  height: 16px;
  margin-left: 2px;
  background: #ff0;
}
.statusbar output {
  width: 50px;
  height: 24px;
  margin: 0 4px;
  border: 1px solid #8c8c8c;
  font-size: 11px;
  line-height: 22px;
  text-align: center;
}
.statusbar output:last-child {
  margin-right: 0;
}
```
